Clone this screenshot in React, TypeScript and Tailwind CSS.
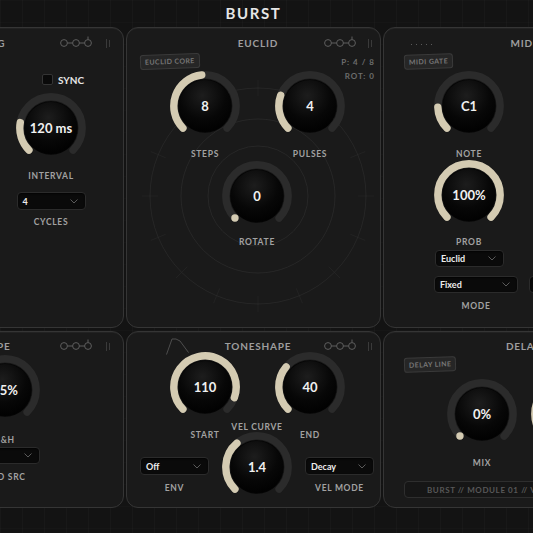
import React, { useId } from 'react';

const CREAM = '#d4cbb2';

function polar(a: number, r: number, c: number) {
  const rad = (a * Math.PI) / 180;
  return [c + r * Math.sin(rad), c - r * Math.cos(rad)];
}

function arcPath(a0: number, a1: number, r: number, c: number) {
  const [x0, y0] = polar(a0, r, c);
  const [x1, y1] = polar(a1, r, c);
  const large = a1 - a0 > 180 ? 1 : 0;
  return `M ${x0} ${y0} A ${r} ${r} 0 ${large} 1 ${x1} ${y1}`;
}

// end = angle (deg, clockwise from 12 o'clock) where the value arc stops; null = zero
function Knob({ value, end }: { value: string; end: number | null }) {
  const id = useId();
  const c = 35;
  const r = 31.2;
  const [dx, dy] = polar(-135, r, c);
  return (
    <div className="relative h-[70px] w-[70px] shrink-0">
      <svg width="70" height="70" viewBox="0 0 70 70" className="absolute inset-0">
        <defs>
          <radialGradient id={id} cx="45%" cy="30%" r="75%">
            <stop offset="0%" stopColor="#1d1d1d" />
            <stop offset="60%" stopColor="#070707" />
            <stop offset="100%" stopColor="#000" />
          </radialGradient>
        </defs>
        <path d={arcPath(-135, 135, r, c)} stroke="#2b2b2b" strokeWidth="7.4" fill="none" strokeLinecap="round" />
        <circle cx={c} cy={c} r="26.8" fill="#050505" />
        <circle cx={c} cy={c} r="26" fill={`url(#${id})`} />
        {end === null ? (
          <circle cx={dx} cy={dy} r="3.7" fill={CREAM} />
        ) : (
          <path d={arcPath(-135, end, r, c)} stroke={CREAM} strokeWidth="7.4" fill="none" strokeLinecap="round" />
        )}
      </svg>
      <div className="absolute inset-0 flex items-center justify-center">
        <span className="text-[13px] font-bold leading-none text-[#f1f1f1]">{value}</span>
      </div>
    </div>
  );
}

function Label({ children, className = '' }: { children: React.ReactNode; className?: string }) {
  return (
    <div className={`whitespace-nowrap text-[8.5px] font-bold leading-[10px] tracking-[0.7px] text-[#a2a2a2] ${className}`}>
      {children}
    </div>
  );
}

function Dropdown({ value, className = '' }: { value: string; className?: string }) {
  return (
    <div
      className={`flex shrink-0 items-center justify-between rounded-[4px] border border-[#2b2b2b] bg-[#0a0a0a] pl-[5px] pr-[7px] shadow-[inset_0_1px_2px_rgba(0,0,0,0.7)] ${className}`}
    >
      <span className="text-[9px] font-bold leading-none text-[#ededed]">{value}</span>
      <svg width="8" height="5" viewBox="0 0 8 5">
        <path d="M0.5 0.5 L4 4 L7.5 0.5" fill="none" stroke="#5a5a5a" strokeWidth="1" />
      </svg>
    </div>
  );
}

function Tag({ children, className = '' }: { children: React.ReactNode; className?: string }) {
  return (
    <div
      className={`absolute -rotate-2 whitespace-nowrap rounded-[3px] border border-[#3a3a3a] bg-[#262626] px-[4px] py-[3px] text-[7px] font-bold leading-none tracking-[0.4px] text-[#767676] ${className}`}
    >
      {children}
    </div>
  );
}

function Chain({ className = '' }: { className?: string }) {
  return (
    <svg className={`absolute ${className}`} width="34" height="12" viewBox="0 0 34 12" fill="none" stroke="#5e5e5e" strokeWidth="1">
      <circle cx="4" cy="7" r="3.4" />
      <circle cx="16" cy="7" r="3.4" />
      <circle cx="28" cy="7" r="3.4" />
      <path d="M7.4 7H12.6M19.4 7H24.6M28 0.5V3.6" />
    </svg>
  );
}

function Grip({ className = '' }: { className?: string }) {
  return (
    <svg className={`absolute ${className}`} width="4" height="9" viewBox="0 0 4 9">
      <path d="M0.5 0V9M3.5 1V8" stroke="#3a3a3a" strokeWidth="1" />
    </svg>
  );
}

function Panel({
  title,
  className,
  headerClass,
  children,
  icons,
}: {
  title: string;
  className: string;
  headerClass: string;
  children: React.ReactNode;
  icons?: React.ReactNode;
}) {
  return (
    <section
      className={`relative shrink-0 overflow-hidden rounded-[12px] border border-[#353535] bg-[#1a1a1a] shadow-[inset_0_1px_0_rgba(255,255,255,0.04)] ${className}`}
    >
      <div className={`relative flex justify-center pl-[9px] ${headerClass}`}>
        <span className="text-[10px] font-bold leading-[12px] tracking-[0.8px] text-[#9e9e9e]">{title}</span>
        {icons}
      </div>
      {children}
    </section>
  );
}

function EuclidRings() {
  const ticks = Array.from({ length: 16 }, (_, i) => i * 22.5);
  return (
    <svg className="pointer-events-none absolute left-0 top-0" width="253" height="299" viewBox="0 0 253 299" fill="none">
      <circle cx="131" cy="168" r="50" stroke="rgba(255,255,255,0.06)" />
      <circle cx="131" cy="168" r="77" stroke="rgba(255,255,255,0.06)" />
      <circle cx="131" cy="168" r="108" stroke="rgba(255,255,255,0.055)" />
      {ticks.map((a) => {
        const [x0, y0] = polar(a, 100, 0);
        const [x1, y1] = polar(a, 116, 0);
        return (
          <line key={a} x1={131 + x0} y1={168 + y0} x2={131 + x1} y2={168 + y1} stroke="rgba(255,255,255,0.035)" />
        );
      })}
    </svg>
  );
}

export default function App() {
  return (
    <div className="relative h-[533px] w-[533px] overflow-hidden bg-[#131313] bg-[linear-gradient(to_right,rgba(255,255,255,0.018)_1px,transparent_1px),linear-gradient(to_bottom,rgba(255,255,255,0.012)_1px,transparent_1px)] bg-[size:22px_22px] font-['Lato','Open_Sans',sans-serif]">
      {/* title bar */}
      <div className="flex h-[27px] items-center justify-center pr-[26px]">
        <span className="text-[15px] font-bold leading-none tracking-[1.6px] text-[#e6e6e6]">BURST</span>
      </div>

      <div className="ml-[-148px] flex w-[803px] flex-col gap-[3px]">
        {/* top row */}
        <div className="flex h-[301px] gap-[2px]">
          <Panel
            title="TRIG"
            className="w-[272px]"
            headerClass="h-[30px] pt-[9px]"
            icons={
              <>
                <Chain className="left-[207px] top-[8px]" />
                <Grip className="left-[253px] top-[11px]" />
              </>
            }
          >
            <div className="mt-[16px] flex items-center gap-[5px] pl-[189px]">
              <div className="h-[11px] w-[11px] rounded-[2px] border border-[#343434] bg-[#0a0a0a]" />
              <span className="text-[10px] font-bold leading-none text-[#e6e6e6]">SYNC</span>
            </div>
            <div className="ml-[163px] mt-[8px] flex w-[70px] flex-col items-center">
              <Knob value="120 ms" end={-80} />
              <Label className="mt-[8px]">INTERVAL</Label>
              <Dropdown value="4" className="mt-[11px] h-[18px] w-[69px]" />
              <Label className="mt-[7px]">CYCLES</Label>
            </div>
          </Panel>

          <Panel
            title="EUCLID"
            className="w-[255px]"
            headerClass="h-[30px] pt-[9px]"
            icons={
              <>
                <Chain className="left-[197px] top-[8px]" />
                <Grip className="left-[241px] top-[11px]" />
              </>
            }
          >
            <EuclidRings />
            <Tag className="left-[13px] top-[26px]">EUCLID CORE</Tag>
            <div className="absolute right-[5px] top-[27px] flex flex-col items-end text-[8px] font-bold leading-[14px] tracking-[1px] text-[#6c6c6c]">
              <span>P: 4 / 8</span>
              <span>ROT: 0</span>
            </div>
            <div className="relative mt-[13px] flex gap-[35px] pl-[43px]">
              <div className="flex w-[70px] flex-col items-center">
                <Knob value="8" end={-6} />
                <Label className="mt-[8px]">STEPS</Label>
              </div>
              <div className="flex w-[70px] flex-col items-center">
                <Knob value="4" end={-70} />
                <Label className="mt-[8px]">PULSES</Label>
              </div>
            </div>
            <div className="relative ml-[95px] mt-[2px] flex w-[70px] flex-col items-center">
              <Knob value="0" end={null} />
              <Label className="mt-[6px]">ROTATE</Label>
            </div>
          </Panel>

          <Panel title="MIDI" className="w-[272px]" headerClass="h-[30px] pt-[9px]">
            <div className="absolute left-[27px] top-[16px] flex gap-[4px]">
              {[0, 1, 2, 3, 4].map((i) => (
                <span key={i} className="h-[1px] w-[1px] bg-[#5a5a5a]" />
              ))}
            </div>
            <Tag className="left-[20px] top-[26px]">MIDI GATE</Tag>
            <div className="ml-[50px] mt-[13px] flex w-[70px] flex-col items-center">
              <Knob value="C1" end={-92} />
              <Label className="mt-[8px]">NOTE</Label>
              <div className="mt-[1px]">
                <Knob value="100%" end={135} />
              </div>
              <Label className="mt-[7px]">PROB</Label>
            </div>
            <Dropdown value="Euclid" className="ml-[51px] mt-[3px] h-[17px] w-[69px]" />
            <div className="ml-[50px] mt-[9px] flex gap-[11px]">
              <Dropdown value="Fixed" className="h-[17px] w-[84px]" />
              <Dropdown value="8" className="h-[17px] w-[69px]" />
            </div>
            <Label className="ml-[50px] mt-[8px] w-[84px] text-center">MODE</Label>
          </Panel>
        </div>

        {/* bottom row */}
        <div className="flex h-[177px] gap-[2px]">
          <Panel
            title="SHAPE"
            className="w-[272px]"
            headerClass="h-[20px] pt-[8px]"
            icons={
              <>
                <Chain className="left-[207px] top-[7px]" />
                <Grip className="left-[253px] top-[10px]" />
              </>
            }
          >
            <div className="ml-[117px] mt-[3px] flex w-[70px] flex-col items-center">
              <Knob value="25%" end={-60} />
              <Label className="mt-[10px]">S&amp;H</Label>
              <Dropdown value="Rnd" className="mt-[2px] h-[17px] w-[69px]" />
              <Label className="mt-[8px]">RND SRC</Label>
            </div>
          </Panel>

          <Panel
            title="TONESHAPE"
            className="w-[255px]"
            headerClass="h-[20px] pt-[8px]"
            icons={
              <>
                <Chain className="left-[197px] top-[7px]" />
                <Grip className="left-[241px] top-[10px]" />
              </>
            }
          >
            <svg className="absolute left-[39px] top-[6px]" width="24" height="17" viewBox="0 0 24 17" fill="none">
              <path d="M0.5 16.5 L6 1 Q10 0 14 3 L22.5 14.5" stroke="#4e4e4e" strokeWidth="1" />
            </svg>
            <div className="flex">
              <div className="ml-[13px] flex w-[100px] flex-col">
                <div className="ml-[30px] flex w-[70px] flex-col items-center">
                  <Knob value="110" end={110} />
                  <Label className="mt-[8px]">START</Label>
                </div>
                <Dropdown value="Off" className="mt-[17px] h-[18px] w-[69px]" />
                <Label className="mt-[8px] w-[69px] text-center">ENV</Label>
              </div>
              <div className="relative ml-[-18px] flex w-[70px] flex-col items-center">
                <Label className="mt-[70px]">VEL CURVE</Label>
                <Knob value="1.4" end={-40} />
              </div>
              <div className="ml-[-17px] flex w-[99px] flex-col">
                <div className="flex w-[70px] flex-col items-center">
                  <Knob value="40" end={-50} />
                  <Label className="mt-[8px]">END</Label>
                </div>
                <Dropdown value="Decay" className="ml-[30px] mt-[17px] h-[18px] w-[69px]" />
                <Label className="ml-[30px] mt-[8px] w-[69px] text-center">VEL MODE</Label>
              </div>
            </div>
          </Panel>

          <Panel title="DELAY" className="w-[272px]" headerClass="h-[20px] pt-[8px]">
            <Tag className="left-[20px] top-[25px]">DELAY LINE</Tag>
            <div className="ml-[63px] mt-[27px] flex gap-[14px]">
              <div className="flex w-[70px] flex-col items-center">
                <Knob value="0%" end={null} />
                <Label className="mt-[9px]">MIX</Label>
              </div>
              <div className="flex w-[70px] flex-col items-center">
                <Knob value="45%" end={-45} />
                <Label className="mt-[9px]">FEEDBACK</Label>
              </div>
            </div>
            <div className="ml-[20px] mt-[13px] flex h-[17px] w-[231px] items-center rounded-[4px] border border-[#2e2e2e] bg-[#161616] pl-[22px]">
              <span className="whitespace-nowrap text-[8px] font-bold leading-none tracking-[0.6px] text-[#585858]">
                BURST // MODULE 01 // V1.0
              </span>
            </div>
          </Panel>
        </div>
      </div>
    </div>
  );
}
